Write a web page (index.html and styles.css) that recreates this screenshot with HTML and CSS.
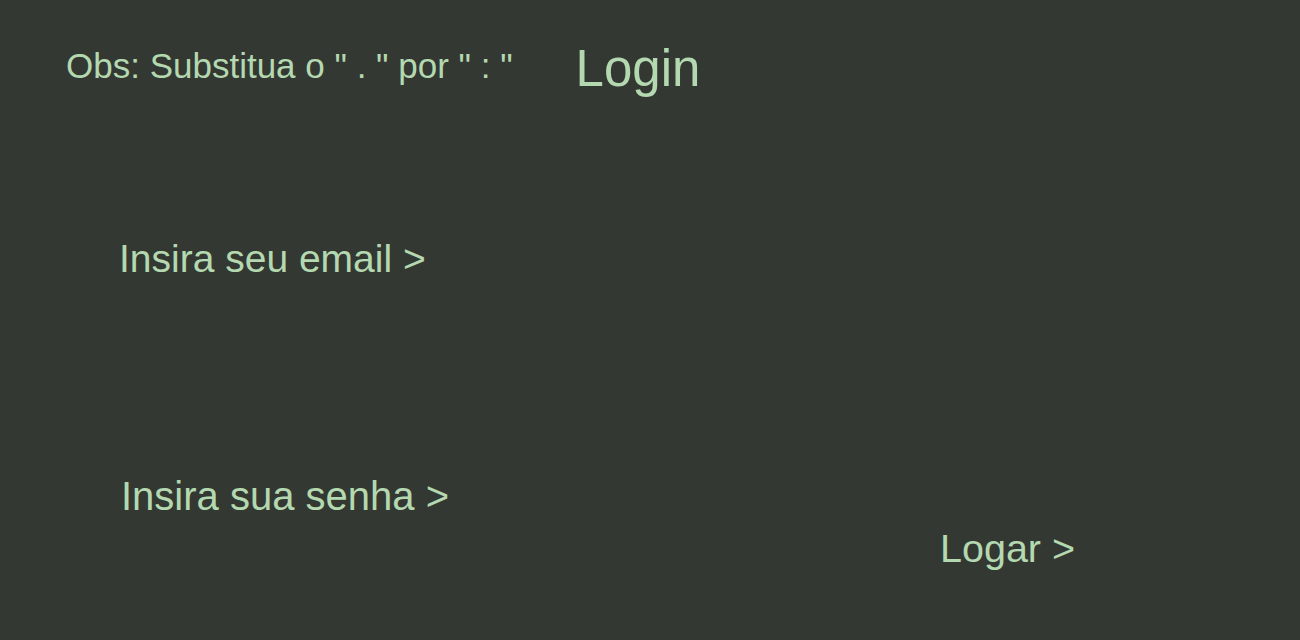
FILE: index.html
```html
<!DOCTYPE html>
<html lang="pt-BR">
<head>
<meta charset="utf-8">
<title>Login</title>
<link rel="stylesheet" href="styles.css">
</head>
<body>
<main class="page">
  <header class="header">
    <p class="note">Obs: Substitua o " . " por " : "</p>
    <h1 class="title">Login</h1>
  </header>
  <form class="form">
    <label class="field field-email">Insira seu email &gt;</label>
    <label class="field field-password">Insira sua senha &gt;</label>
    <div class="actions">
      <span class="submit">Logar &gt;</span>
    </div>
  </form>
</main>
</body>
</html>
```

FILE: styles.css
```css
html, body {
  margin: 0;
  padding: 0;
  background: #343833;
  height: 100%;
}
.page {
  font-family: "Liberation Sans", Arial, sans-serif;
  color: #b4d8b0;
  padding-top: 40px;
}
.header {
  display: flex;
  align-items: flex-start;
  padding-left: 66px;
}
.note {
  margin: 6px 0 0 0;
  font-size: 35px;
  font-weight: normal;
}
.title {
  margin: -1px 0 0 63px;
  font-size: 51px;
  font-weight: normal;
}
.form {
  display: flex;
  flex-direction: column;
  align-items: flex-start;
}
.field {
  display: block;
  font-size: 40px;
}
.field-email {
  font-size: 39px;
  margin: 139px 0 0 119px;
}
.field-password {
  margin: 193px 0 0 121px;
}
.actions {
  margin: 7px 0 0 940px;
}
.submit {
  display: block;
  font-size: 39.5px;
}
```
